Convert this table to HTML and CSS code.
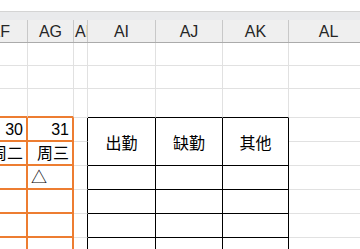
FILE: index.html
```html
<!DOCTYPE html>
<html lang="zh">
<head>
<meta charset="utf-8">
<link rel="stylesheet" href="styles.css">
</head>
<body>
<div class="sheet">
  <div class="top"></div>
  <div class="colbar">
    <div class="cols heads">
      <div class="h first">AF</div>
      <div class="h">AG</div>
      <div class="h clip">AH</div>
      <div class="h">AI</div>
      <div class="h">AJ</div>
      <div class="h">AK</div>
      <div class="h">AL</div>
    </div>
  </div>
  <div class="cols grid">
    <!-- row 1 -->
    <div class="c"></div><div class="c"></div><div class="c"></div><div class="c"></div><div class="c"></div><div class="c"></div><div class="c"></div>
    <!-- row 2 -->
    <div class="c"></div><div class="c"></div><div class="c"></div><div class="c"></div><div class="c"></div><div class="c"></div><div class="c"></div>
    <!-- row 3 -->
    <div class="c ot"></div><div class="c ot"></div><div class="c"></div><div class="c bt"></div><div class="c bt"></div><div class="c bt"></div><div class="c"></div>
    <!-- row 4 -->
    <div class="c o r">30</div><div class="c o r">31</div><div class="c br"></div>
    <div class="c b m">出勤</div><div class="c b m">缺勤</div><div class="c b m">其他</div>
    <div class="c"></div>
    <!-- row 5 -->
    <div class="c o r">周二</div><div class="c o r">周三</div><div class="c br"></div><div class="c"></div>
    <!-- row 6 -->
    <div class="c o"></div><div class="c o">△</div><div class="c br"></div><div class="c b"></div><div class="c b"></div><div class="c b"></div><div class="c"></div>
    <!-- row 7 -->
    <div class="c o"></div><div class="c o"></div><div class="c br"></div><div class="c b"></div><div class="c b"></div><div class="c b"></div><div class="c"></div>
    <!-- row 8 -->
    <div class="c o"></div><div class="c o"></div><div class="c br"></div><div class="c b"></div><div class="c b"></div><div class="c b"></div><div class="c"></div>
    <!-- row 9 -->
    <div class="c o"></div><div class="c o"></div><div class="c br"></div><div class="c b"></div><div class="c b"></div><div class="c b"></div><div class="c"></div>
  </div>
</div>
</body>
</html>
```
FILE: styles.css
```css
* {
  box-sizing: border-box;
  margin: 0;
  padding: 0;
}

html, body {
  width: 360px;
  height: 249px;
  overflow: hidden;
  background: #fff;
}

body {
  font-family: "Liberation Sans", "Noto Sans CJK SC", sans-serif;
  color: #000;
}

.sheet {
  width: 360px;
  height: 249px;
  overflow: hidden;
}

.top {
  height: 11px;
  background: #fff;
}

.colbar {
  border-top: 1px solid #d4d4d4;
  background: #e9eaec;
  padding-top: 8px;
}

.cols {
  display: grid;
  grid-template-columns: 56px 46px 14px 68px 67px 66px 80px;
  margin-left: -28px;
}

.heads {
  height: 23px;
  background: #efefef;
  border-bottom: 1px solid #ababab;
}

.h {
  border-right: 1px solid #c8c8c8;
  font-size: 16px;
  color: #262626;
  display: flex;
  align-items: center;
  justify-content: center;
  overflow: hidden;
  white-space: nowrap;
  padding-top: 1px;
}

.h.first {
  justify-content: flex-end;
  padding-right: 17px;
}

.h.clip {
  justify-content: flex-start;
  padding-left: 1px;
}

.grid {
  grid-template-rows: 23px 23px 29px repeat(6, 24px);
}

.c {
  border-right: 1px solid #e1e1e1;
  border-bottom: 1px solid #e1e1e1;
  font-size: 16px;
  line-height: 20px;
  display: flex;
  align-items: flex-end;
  padding: 0 3px;
  white-space: nowrap;
  overflow: hidden;
}

.r {
  justify-content: flex-end;
}

.o {
  border-right: 2px solid #ed7d31;
  border-bottom: 2px solid #ed7d31;
}

.ot {
  border-bottom: 2px solid #ed7d31;
}

.b {
  border-right: 1px solid #000;
  border-bottom: 1px solid #000;
}

.bt {
  border-bottom-color: #000;
}

.br {
  border-right-color: #000;
}

.m {
  grid-row: span 2;
  justify-content: center;
  align-items: center;
  padding-top: 4px;
}
```
